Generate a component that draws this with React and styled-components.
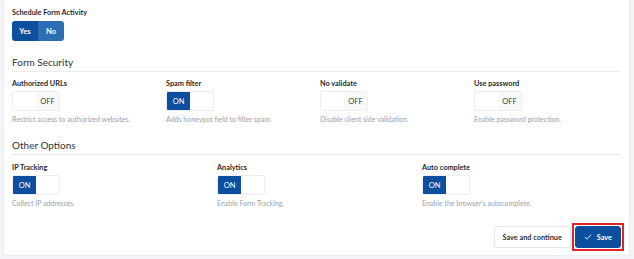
import React from "react";
import styled, { createGlobalStyle } from "styled-components";

const Global = createGlobalStyle`
  html, body { margin: 0; padding: 0; background: #f3f4f8; }
  body { font-family: Lato, "Open Sans", sans-serif; color: #2b2f33; }
  * { box-sizing: border-box; }
`;

const Page = styled.div`
  width: 634px;
  height: 259px;
  padding: 0 4px 3px 3px;
`;

const Panel = styled.div`
  background: #fff;
  height: 256px;
  border: 1px solid #eceef2;
  border-top: none;
  border-radius: 0 0 3px 3px;
  padding: 7px 9px 0 8px;
  display: flex;
  flex-direction: column;
`;

const Label = styled.div`
  font-size: 7.3px;
  font-weight: 700;
  color: #26292c;
  line-height: 11px;
  height: 11px;
  flex-shrink: 0;
`;

const Segmented = styled.div`
  display: flex;
  flex-shrink: 0;
  margin-top: 3px;
  width: 52px;
  height: 20px;
  border-radius: 3px;
  overflow: hidden;
`;

const SegButton = styled.div`
  flex: 1;
  display: flex;
  align-items: center;
  justify-content: center;
  font-size: 7.5px;
  font-weight: 700;
  color: #fff;
  background: ${(p) => (p.active ? "#0b4f9e" : "#2d6db4")};
`;

const SectionTitle = styled.div`
  flex-shrink: 0;
  margin-top: ${(p) => p.top}px;
  font-size: 10px;
  color: #2e3236;
  line-height: 13px;
  padding-bottom: 2px;
  border-bottom: 1px solid #e9ebef;
`;

const Grid = styled.div`
  display: grid;
  flex-shrink: 0;
  grid-template-columns: repeat(${(p) => p.cols}, ${(p) => p.w}px);
  margin-top: ${(p) => p.top}px;
`;

const Field = styled.div`
  display: flex;
  flex-direction: column;
`;

const Toggle = styled.div`
  display: flex;
  margin-top: 2px;
  width: 48px;
  height: 20px;
  border: 1px solid #eceef1;
  border-radius: 2px;
  overflow: hidden;
`;

const Half = styled.div`
  width: 24px;
  display: flex;
  align-items: center;
  justify-content: center;
  font-size: 7.5px;
  color: ${(p) => (p.on ? "#fff" : "#3a3d40")};
  background: ${(p) => (p.on ? "#0b4f9e" : p.off ? "#f7f8fa" : "#fff")};
`;

const Help = styled.div`
  margin-top: 3px;
  font-size: 7px;
  color: #9ba1a7;
  line-height: 10px;
`;

const Footer = styled.div`
  margin-top: auto;
  margin-bottom: 4px;
  margin-right: -4px;
  display: flex;
  justify-content: flex-end;
  align-items: center;
  gap: 1px;
`;

const Button = styled.button`
  height: 22px;
  padding: 0 ${(p) => (p.primary ? 8 : 8)}px;
  font-family: inherit;
  font-size: 7.3px;
  font-weight: 700;
  border-radius: 3px;
  display: flex;
  align-items: center;
  gap: 5px;
  border: 1px solid ${(p) => (p.primary ? "#0b4f9e" : "#e3e6ea")};
  background: ${(p) => (p.primary ? "#0b4f9e" : "#fff")};
  color: ${(p) => (p.primary ? "#fff" : "#2b2f33")};
`;

const Highlight = styled.div`
  border: 2px solid #e0242a;
  padding: 1px;
`;

const Switch = ({ on }) => (
  <Toggle>
    {on ? (
      <>
        <Half on>ON</Half>
        <Half />
      </>
    ) : (
      <>
        <Half />
        <Half off>OFF</Half>
      </>
    )}
  </Toggle>
);

const security = [
  { label: "Authorized URLs", on: false, help: "Restrict access to authorized websites." },
  { label: "Spam filter", on: true, help: "Adds honeypot field to filter spam." },
  { label: "No validate", on: false, help: "Disable client side validation." },
  { label: "Use password", on: false, help: "Enable password protection." },
];

const other = [
  { label: "IP Tracking", on: true, help: "Collect IP addresses." },
  { label: "Analytics", on: true, help: "Enable Form Tracking." },
  { label: "Auto complete", on: true, help: "Enable the browser's autocomplete." },
];

export default function App() {
  return (
    <Page>
      <Global />
      <Panel>
        <Label>Schedule Form Activity</Label>
        <Segmented>
          <SegButton active>Yes</SegButton>
          <SegButton>No</SegButton>
        </Segmented>

        <SectionTitle top={15}>Form Security</SectionTitle>
        <Grid cols={4} w={154} top={6}>
          {security.map((f) => (
            <Field key={f.label}>
              <Label>{f.label}</Label>
              <Switch on={f.on} />
              <Help>{f.help}</Help>
            </Field>
          ))}
        </Grid>

        <SectionTitle top={15}>Other Options</SectionTitle>
        <Grid cols={3} w={205} top={7}>
          {other.map((f) => (
            <Field key={f.label}>
              <Label>{f.label}</Label>
              <Switch on={f.on} />
              <Help>{f.help}</Help>
            </Field>
          ))}
        </Grid>

        <Footer>
          <Button>Save and continue</Button>
          <Highlight>
            <Button primary>
              <svg width="8" height="6" viewBox="0 0 9 7" fill="none">
                <path d="M0.8 3.6 L3.2 6 L8.2 0.8" stroke="#fff" strokeWidth="1" />
              </svg>
              Save
            </Button>
          </Highlight>
        </Footer>
      </Panel>
    </Page>
  );
}
